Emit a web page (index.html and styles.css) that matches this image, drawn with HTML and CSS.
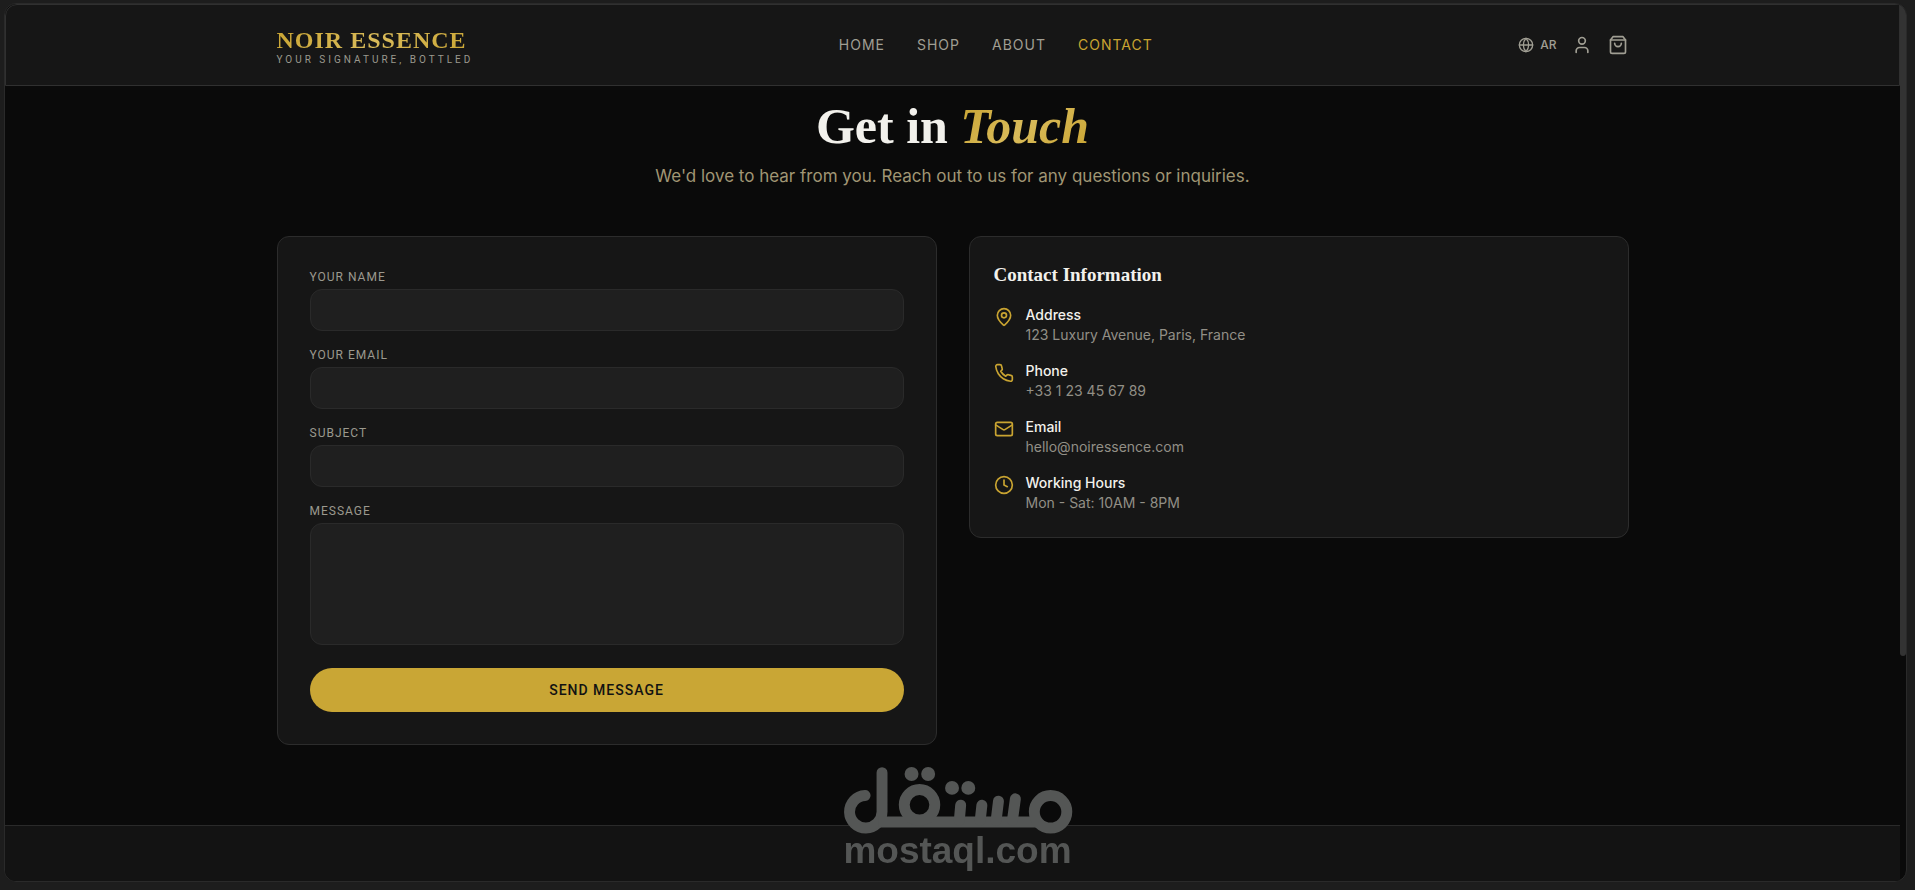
FILE: index.html
```html
<!DOCTYPE html>
<html lang="en">
<head>
<meta charset="utf-8">
<meta name="viewport" content="width=device-width, initial-scale=1">
<title>Noir Essence – Contact</title>
<link rel="stylesheet" href="styles.css">
</head>
<body>
<div class="frame">
  <div class="page">
    <header class="header">
      <div class="container header-row">
        <a class="brand" href="#">
          <span class="brand-name gold-text">NOIR ESSENCE</span>
          <span class="brand-tag">YOUR SIGNATURE, BOTTLED</span>
        </a>
        <nav class="nav">
          <a href="#">HOME</a>
          <a href="#">SHOP</a>
          <a href="#">ABOUT</a>
          <a href="#" class="active">CONTACT</a>
        </nav>
        <div class="actions">
          <button type="button" class="lang">
            <svg class="icon icon-sm" viewBox="0 0 24 24"><circle cx="12" cy="12" r="10"/><path d="M12 2a14.5 14.5 0 0 0 0 20 14.5 14.5 0 0 0 0-20"/><path d="M2 12h20"/></svg>
            <span>AR</span>
          </button>
          <a href="#" aria-label="Account">
            <svg class="icon" viewBox="0 0 24 24"><path d="M19 21v-2a4 4 0 0 0-4-4H9a4 4 0 0 0-4 4v2"/><circle cx="12" cy="7" r="4"/></svg>
          </a>
          <button type="button" aria-label="Cart">
            <svg class="icon" viewBox="0 0 24 24"><path d="M6 2 3 6v14a2 2 0 0 0 2 2h14a2 2 0 0 0 2-2V6l-3-4Z"/><path d="M3 6h18"/><path d="M16 10a4 4 0 0 1-8 0"/></svg>
          </button>
        </div>
      </div>
    </header>

    <main class="main container">
      <div class="hero">
        <h1>Get in <em class="gold-text">Touch</em></h1>
        <p>We'd love to hear from you. Reach out to us for any questions or inquiries.</p>
      </div>
      <div class="columns">
        <form class="card form">
          <div class="field">
            <label for="name">YOUR NAME</label>
            <input id="name" type="text">
          </div>
          <div class="field">
            <label for="email">YOUR EMAIL</label>
            <input id="email" type="email">
          </div>
          <div class="field">
            <label for="subject">SUBJECT</label>
            <input id="subject" type="text">
          </div>
          <div class="field">
            <label for="message">MESSAGE</label>
            <textarea id="message"></textarea>
          </div>
          <button type="button" class="send">SEND MESSAGE</button>
        </form>

        <section class="card info">
          <h2>Contact Information</h2>
          <ul>
            <li>
              <svg class="icon" viewBox="0 0 24 24"><path d="M20 10c0 4.993-5.539 10.193-7.399 11.799a1 1 0 0 1-1.202 0C9.539 20.193 4 14.993 4 10a8 8 0 0 1 16 0"/><circle cx="12" cy="10" r="3"/></svg>
              <div><h3>Address</h3><p>123 Luxury Avenue, Paris, France</p></div>
            </li>
            <li>
              <svg class="icon" viewBox="0 0 24 24"><path d="M22 16.92v3a2 2 0 0 1-2.18 2 19.79 19.79 0 0 1-8.63-3.07 19.5 19.5 0 0 1-6-6 19.79 19.79 0 0 1-3.07-8.67A2 2 0 0 1 4.11 2h3a2 2 0 0 1 2 1.72 12.84 12.84 0 0 0 .7 2.81 2 2 0 0 1-.45 2.11L8.09 9.91a16 16 0 0 0 6 6l1.27-1.27a2 2 0 0 1 2.11-.45 12.84 12.84 0 0 0 2.81.7A2 2 0 0 1 22 16.92z"/></svg>
              <div><h3>Phone</h3><p>+33 1 23 45 67 89</p></div>
            </li>
            <li>
              <svg class="icon" viewBox="0 0 24 24"><rect x="2" y="4" width="20" height="16" rx="2"/><path d="m22 7-8.97 5.7a1.94 1.94 0 0 1-2.06 0L2 7"/></svg>
              <div><h3>Email</h3><p>hello@noiressence.com</p></div>
            </li>
            <li>
              <svg class="icon" viewBox="0 0 24 24"><circle cx="12" cy="12" r="10"/><path d="M12 6v6l4 2"/></svg>
              <div><h3>Working Hours</h3><p>Mon - Sat: 10AM - 8PM</p></div>
            </li>
          </ul>
        </section>
      </div>
    </main>
    <footer class="footer"></footer>
  </div>
  <div class="scrollbar"><div class="thumb"></div></div>
</div>

<div class="watermark">
  <svg class="watermark-mark" viewBox="63 76 696 208" role="img" aria-label="مستقل">
    <path d="M131 165A49 49 0 1 0 182 214V96"/>
    <path d="M170 245H655" stroke-linecap="butt"/>
    <circle cx="295" cy="193" r="46"/>
    <circle cx="690" cy="214" r="49"/>
    <path d="M419 194L415 240M483 194L478 240M533 182L526 240M584 175L575 240"/>
    <g class="dots"><circle cx="271" cy="100" r="21"/><circle cx="321" cy="100" r="21"/><circle cx="393" cy="142" r="21"/><circle cx="442" cy="142" r="21"/></g>
  </svg>
  <span>mostaql.com</span>
</div>
</body>
</html>
```
FILE: styles.css
```css
* { box-sizing: border-box; margin: 0; padding: 0; }

body {
  min-height: 100vh;
  padding: 3px 8px 8px 4px;
  display: flex;
  background: #1d1d1d;
  color: #f2f1ec;
  font-family: Inter, "Open Sans", sans-serif;
  font-size: 14px;
  line-height: 20px;
}

a { color: inherit; text-decoration: none; }
button { font: inherit; color: inherit; background: none; border: 0; cursor: pointer; }
ul { list-style: none; }

.frame {
  flex: 1;
  display: flex;
  overflow: hidden;
  background: #0a0a0a;
  border: 1px solid #2a2a2a;
  border-radius: 12px;
}
.page { flex: 1; display: flex; flex-direction: column; }
.scrollbar { width: 6px; }
.thumb { height: 74.4%; background: #333333; border-radius: 0 0 3px 3px; }

.container { width: 100%; max-width: 1400px; margin: 0 auto; padding: 0 24px; }

.header {
  padding: 19px 0;
  background: #161616;
  border: 1px solid #303030;
  border-radius: 12px 0 0 0;
}
.header-row { display: flex; justify-content: space-between; align-items: center; }
.brand { display: flex; flex-direction: column; padding-top: 2px; white-space: nowrap; }
.brand-name {
  font-family: "Liberation Serif", serif;
  font-size: 24px;
  font-weight: 700;
  line-height: 28px;
  letter-spacing: 1px;
}
.brand-tag {
  font-family: Roboto, sans-serif;
  font-size: 10px;
  line-height: 12px;
  letter-spacing: 3px;
  color: #9b998e;
}
.gold-text {
  background: linear-gradient(135deg, #c9a431, #d9bb5a, #c9a431);
  -webkit-background-clip: text;
  background-clip: text;
  color: transparent;
}
.nav { display: flex; gap: 32px; color: #a09e93; letter-spacing: 1px; }
.nav .active { color: #c9a431; }
.actions { display: flex; align-items: center; gap: 16px; color: #a09e93; }
.actions a, .actions button { display: flex; align-items: center; }
.actions .lang { gap: 6px; font-size: 12px; font-weight: 500; }

.icon {
  flex: none;
  width: 20px;
  height: 20px;
  fill: none;
  stroke: currentColor;
  stroke-width: 2;
  stroke-linecap: round;
  stroke-linejoin: round;
}
.icon-sm { width: 16px; height: 16px; }

.main { flex: 1; padding-top: 16px; padding-bottom: 80px; }
.hero { text-align: center; margin-bottom: 48px; }
.hero h1 {
  font-family: "Liberation Serif", serif;
  font-size: 50px;
  line-height: 48px;
  margin-bottom: 14px;
}
.hero p { font-size: 17px; line-height: 24px; color: #a09674; }

.columns { display: grid; grid-template-columns: 1fr 1fr; gap: 32px; align-items: start; }
.card { background: #161616; border: 1px solid #2c2c2c; border-radius: 12px; }

.form { padding: 32px; display: flex; flex-direction: column; gap: 16px; }
.field { display: flex; flex-direction: column; gap: 4px; }
.field label {
  font-family: Roboto, sans-serif;
  font-size: 12px;
  line-height: 16px;
  letter-spacing: 1px;
  color: #9b998e;
}
.field input, .field textarea {
  width: 100%;
  height: 42px;
  padding: 10px 16px;
  font: inherit;
  color: inherit;
  background: #1f1f1f;
  border: 1px solid #2a2a2a;
  border-radius: 12px;
  resize: none;
}
.field textarea { height: 122px; }
.send {
  margin-top: 7px;
  padding: 12px;
  border-radius: 24px;
  background: #c9a635;
  color: #121212;
  font-family: Roboto, sans-serif;
  font-weight: 500;
  letter-spacing: 1px;
}

.info { padding: 24px; }
.info h2 {
  font-family: "Liberation Serif", serif;
  font-size: 19px;
  line-height: 28px;
  margin-bottom: 16px;
}
.info ul { display: flex; flex-direction: column; gap: 16px; }
.info li { display: flex; gap: 12px; }
.info .icon { margin-top: 2px; color: #c9a431; }
.info h3 { font-size: 14px; font-weight: 500; }
.info p { color: #928f86; }

.footer { height: 56px; background: #131313; border-top: 1px solid #2a2a2a; }

.watermark {
  position: fixed;
  left: 50%;
  bottom: 23px;
  transform: translateX(-50%);
  display: flex;
  flex-direction: column;
  align-items: center;
  color: #545655;
  font-family: "Liberation Sans", sans-serif;
  font-size: 37px;
  font-weight: 700;
  line-height: 32px;
  pointer-events: none;
}
.watermark-mark {
  width: 232px;
  height: 69px;
  fill: none;
  stroke: currentColor;
  stroke-width: 33;
  stroke-linecap: round;
}
.dots { fill: currentColor; stroke: none; }
```
